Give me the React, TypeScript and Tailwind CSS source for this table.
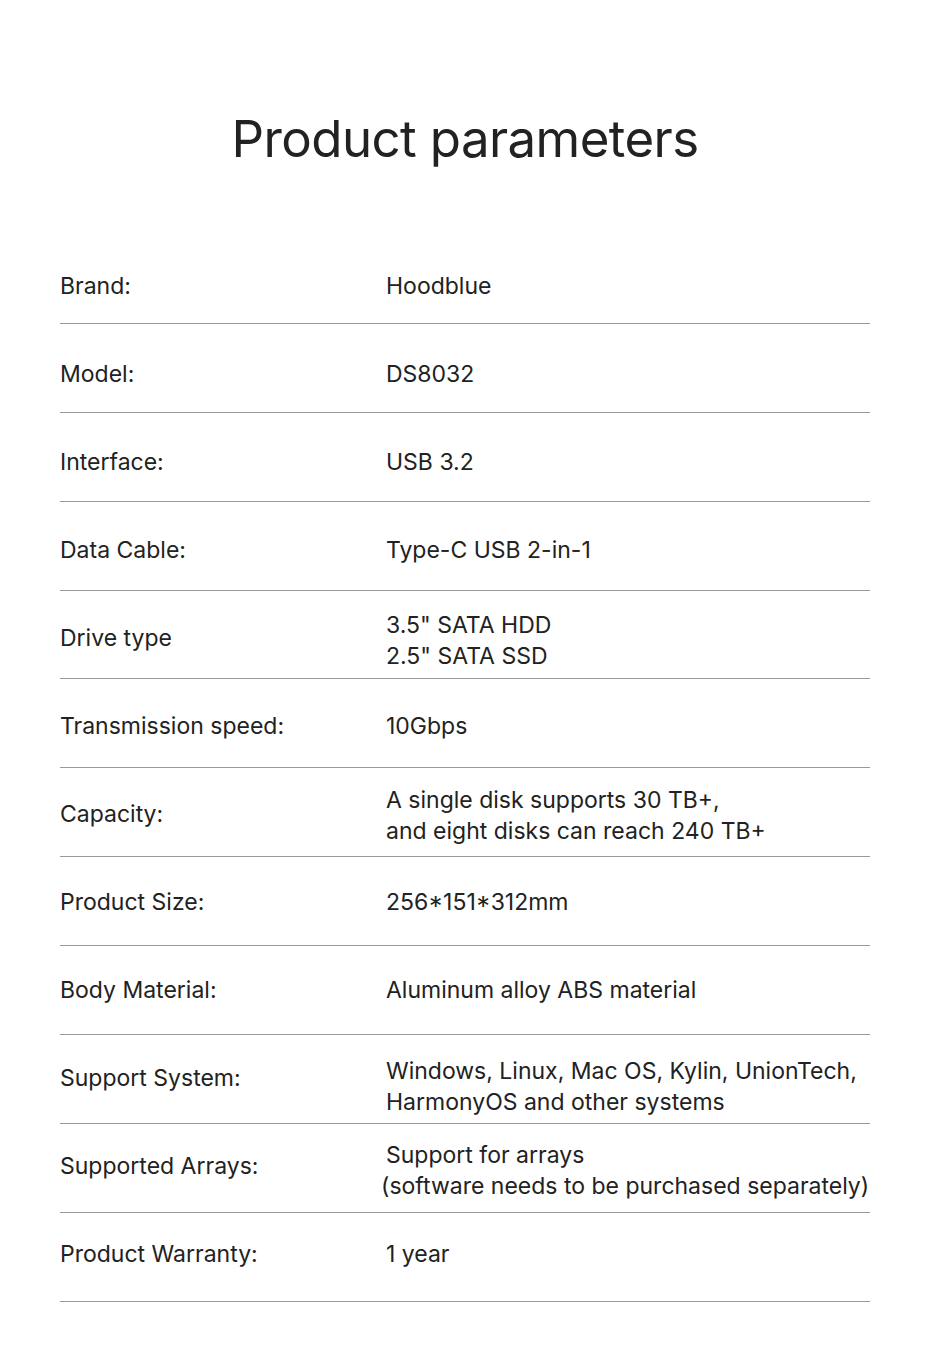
import React from 'react';

interface Param {
  label: string;
  value: string[];
  drop?: string;
}

// drop = extra top padding on the value column where the source sits lower
const params: Param[] = [
  { label: 'Brand:', value: ['Hoodblue'] },
  { label: 'Model:', value: ['DS8032'] },
  { label: 'Interface:', value: ['USB 3.2'] },
  { label: 'Data Cable:', value: ['Type-C USB 2-in-1'] },
  { label: 'Drive type', value: ['3.5" SATA HDD', '2.5" SATA SSD'], drop: 'pt-[4px]' },
  { label: 'Transmission speed:', value: ['10Gbps'] },
  { label: 'Capacity:', value: ['A single disk supports 30 TB+,', 'and eight disks can reach 240 TB+'], drop: 'pt-[2px]' },
  { label: 'Product Size:', value: ['256*151*312mm'] },
  { label: 'Body Material:', value: ['Aluminum alloy ABS material'] },
  { label: 'Support System:', value: ['Windows, Linux, Mac OS, Kylin, UnionTech,', 'HarmonyOS and other systems'], drop: 'pt-[16px]' },
  { label: 'Supported Arrays:', value: ['Support for arrays', '(software needs to be purchased separately)'], drop: 'pt-[8px]' },
  { label: 'Product Warranty:', value: ['1 year'] },
];

export default function App() {
  return (
    <div className="w-[930px] h-[1355px] bg-white text-[#222222]" style={{ fontFamily: 'Inter, "Noto Sans", sans-serif' }}>
      <h1 className="pt-[104px] text-center text-[51px] leading-[70px] font-normal tracking-[-0.6px]">
        Product parameters
      </h1>
      <div className="mx-[60px] mt-[61px]">
        {params.map((p, idx) => {
          // text in the source drifts up ~1px per row against the rules
          const shift = 16 - 1.8 * idx;
          return (
            <div
              key={p.label}
              className="h-[88.9px] flex items-center border-b border-[#9a9a9a]"
              style={{ paddingTop: Math.max(0, shift), paddingBottom: Math.max(0, -shift) }}
            >
              <div className="w-[326px] text-[23px] leading-[31px]">{p.label}</div>
              <div className={`flex-1 text-[23px] leading-[31px] ${p.drop ?? ''}`}>
                {p.value.map((line, i) => (
                  <div key={i} className={line.startsWith('(') ? '-ml-[5px] whitespace-nowrap' : 'whitespace-nowrap'}>
                    {line}
                  </div>
                ))}
              </div>
            </div>
          );
        })}
      </div>
    </div>
  );
}
